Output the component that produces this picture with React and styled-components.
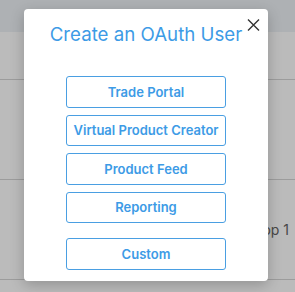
import React from "react";
import styled, { createGlobalStyle } from "styled-components";

const Global = createGlobalStyle`
  html, body { margin: 0; padding: 0; }
  body {
    width: 295px;
    height: 292px;
    overflow: hidden;
    background: #bbbbbb;
    font-family: Inter, "Noto Sans", sans-serif;
  }
`;

const Page = styled.div`
  position: relative;
  width: 295px;
  height: 292px;
  overflow: hidden;
  background: #bbbbbb;
`;

const TopBar = styled.div`
  height: 32px;
  background: #aeb1b4;
`;

const Row = styled.div`
  height: ${(p) => p.$h}px;
  border-bottom: 1px solid #9c9c9c;
  display: flex;
  align-items: center;
  justify-content: flex-end;
  padding-right: 6px;
  font-size: 14px;
  color: #474747;
`;

const Modal = styled.div`
  position: absolute;
  left: 24px;
  top: 9px;
  width: 244px;
  height: 272px;
  box-sizing: border-box;
  background: #ffffff;
  border-radius: 4px;
  box-shadow: 0 4px 14px rgba(0, 0, 0, 0.22);
  display: flex;
  flex-direction: column;
  align-items: center;
  padding-top: 12px;
`;

const Title = styled.h2`
  margin: 0;
  font-size: 18.7px;
  font-weight: 400;
  line-height: 28px;
  color: #3d9be6;
`;

const Close = styled.button`
  position: absolute;
  top: 8px;
  right: 7px;
  width: 16px;
  height: 16px;
  padding: 0;
  border: 0;
  background: transparent;
  display: flex;
  align-items: center;
  justify-content: center;
`;

const List = styled.div`
  display: flex;
  flex-direction: column;
  gap: 7px;
  margin-top: 27px;
`;

const Option = styled.button`
  width: 160px;
  height: 31.5px;
  box-sizing: border-box;
  border: 1px solid #4a9fe2;
  border-radius: 3px;
  background: #fff;
  color: #3d9be6;
  font-family: Inter, "Noto Sans", sans-serif;
  font-size: 13px;
  font-weight: 600;
  padding: 0;
  margin-top: ${(p) => (p.$separated ? "8px" : "0")};
`;

export default function App() {
  return (
    <>
      <Global />
      <Page>
        <TopBar />
        <Row $h={47} />
        <Row $h={99} />
        <Row $h={99}>op 1</Row>
        <Modal>
          <Close aria-label="Close">
            <svg width="13" height="12" viewBox="0 0 13 12">
              <path d="M1 0.5 L12 11.5 M12 0.5 L1 11.5" stroke="#333" strokeWidth="1.4" fill="none" />
            </svg>
          </Close>
          <Title>Create an OAuth User</Title>
          <List>
            <Option>Trade Portal</Option>
            <Option>Virtual Product Creator</Option>
            <Option>Product Feed</Option>
            <Option>Reporting</Option>
            <Option $separated>Custom</Option>
          </List>
        </Modal>
      </Page>
    </>
  );
}
